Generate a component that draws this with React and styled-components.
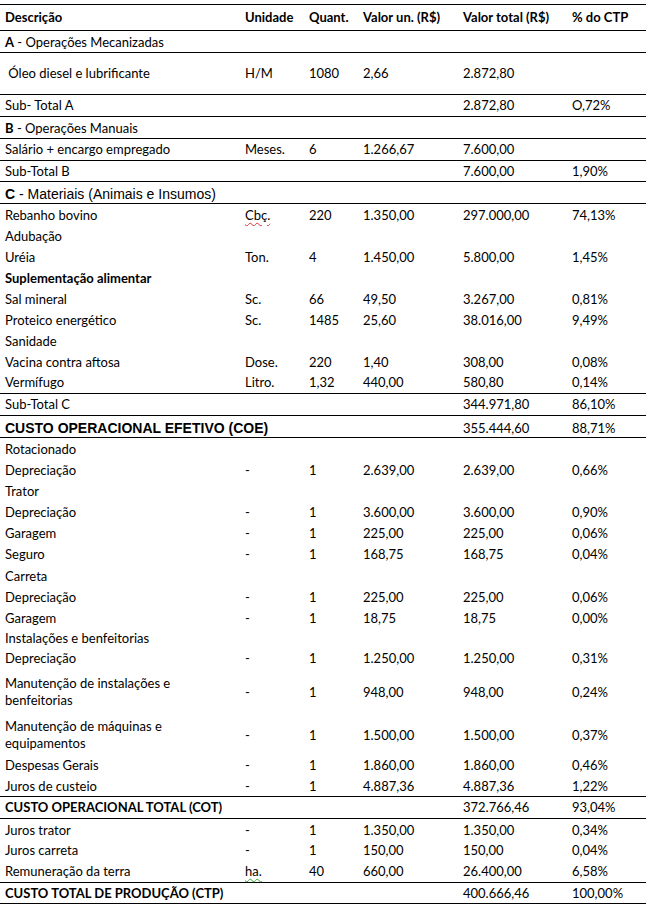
import React from 'react';
import styled, { createGlobalStyle } from 'styled-components';

const GlobalStyle = createGlobalStyle`
    html, body {
        margin: 0;
        padding: 0;
        background: #fff;
    }
    body {
        font-family: Lato, 'Liberation Sans', sans-serif;
        color: #000;
    }
`;

const B = ({ children }) => <strong>{children}</strong>;

// h = height of the row including its bottom rule
const rows = [
    { h: 26, line: true, head: true, cells: ['Descrição', 'Unidade', 'Quant.', 'Valor un. (R$)', 'Valor total (R$)', '% do CTP'] },
    { h: 22, line: true, span: true, low: 1, cells: [<><B>A</B> - Operações Mecanizadas</>] },
    { h: 42, line: true, cells: ['\u00a0Óleo diesel e lubrificante', 'H/M', '1080', '2,66', '2.872,80', ''] },
    { h: 22, line: true, cells: ['Sub- Total A', '', '', '', '2.872,80', 'O,72%'] },
    { h: 22, line: true, span: true, low: 1, cells: [<><B>B</B> - Operações Manuais</>] },
    { h: 22, line: true, cells: ['Salário + encargo empregado', 'Meses.', '6', '1.266,67', '7.600,00', ''] },
    { h: 21, line: true, cells: ['Sub-Total B', '', '', '', '7.600,00', '1,90%'] },
    { h: 22, line: true, span: true, arial: true, low: 2, cells: [<><B>C</B> - Materiais (Animais e Insumos)</>] },
    { h: 21, low: 1, cells: ['Rebanho bovino', 'Cbç.', '220', '1.350,00', '297.000,00', '74,13%'], typo: 'red' },
    { h: 21, low: 1, cells: ['Adubação'] },
    { h: 21, low: 1, cells: ['Uréia', 'Ton.', '4', '1.450,00', '5.800,00', '1,45%'] },
    { h: 21, low: 1, bold: true, cells: ['Suplementação alimentar'] },
    { h: 21, low: 1, cells: ['Sal mineral', 'Sc.', '66', '49,50', '3.267,00', '0,81%'] },
    { h: 21, low: 1, cells: ['Proteico energético', 'Sc.', '1485', '25,60', '38.016,00', '9,49%'] },
    { h: 21, low: 1, cells: ['Sanidade'] },
    { h: 21, low: 1, cells: ['Vacina contra aftosa', 'Dose.', '220', '1,40', '308,00', '0,08%'] },
    { h: 22, line: true, cells: ['Vermífugo', 'Litro.', '1,32', '440,00', '580,80', '0,14%'] },
    { h: 22, line: true, cells: ['Sub-Total C', '', '', '', '344.971,80', '86,10%'] },
    { h: 22, line: true, arial: true, bold: true, low: 2, cells: ['CUSTO OPERACIONAL EFETIVO (COE)', '', '', '', '355.444,60', '88,71%'] },
    { h: 22, low: 1, cells: ['Rotacionado'] },
    { h: 21, cells: ['Depreciação', '-', '1', '2.639,00', '2.639,00', '0,66%'] },
    { h: 21, cells: ['Trator'] },
    { h: 21, cells: ['Depreciação', '-', '1', '3.600,00', '3.600,00', '0,90%'] },
    { h: 21, cells: ['Garagem', '-', '1', '225,00', '225,00', '0,06%'] },
    { h: 22, cells: ['Seguro', '-', '1', '168,75', '168,75', '0,04%'] },
    { h: 21, cells: ['Carreta'] },
    { h: 21, cells: ['Depreciação', '-', '1', '225,00', '225,00', '0,06%'] },
    { h: 21, cells: ['Garagem', '-', '1', '18,75', '18,75', '0,00%'] },
    { h: 19, cells: ['Instalações e benfeitorias'] },
    { h: 22, cells: ['Depreciação', '-', '1', '1.250,00', '1.250,00', '0,31%'] },
    { h: 45, cells: [<>Manutenção de instalações e<br />benfeitorias</>, '-', '1', '948,00', '948,00', '0,24%'] },
    { h: 41, cells: [<>Manutenção de máquinas e<br />equipamentos</>, '-', '1', '1.500,00', '1.500,00', '0,37%'] },
    { h: 20, cells: ['Despesas Gerais', '-', '1', '1.860,00', '1.860,00', '0,46%'] },
    { h: 21, line: true, cells: ['Juros de custeio', '-', '1', '4.887,36', '4.887,36', '1,22%'] },
    { h: 22, line: true, bold: true, cells: ['CUSTO OPERACIONAL TOTAL (COT)', '', '', '', '372.766,46', '93,04%'] },
    { h: 21, low: 1, cells: ['Juros trator', '-', '1', '1.350,00', '1.350,00', '0,34%'] },
    { h: 21, cells: ['Juros carreta', '-', '1', '150,00', '150,00', '0,04%'] },
    { h: 22, line: true, cells: ['Remuneração da terra', 'ha.', '40', '660,00', '26.400,00', '6,58%'], typo: 'green' },
    { h: 21, line: true, bold: true, cells: ['CUSTO TOTAL DE PRODUÇÃO (CTP)', '', '', '', '400.666,46', '100,00%'] },
];

export default function App() {
    return (
        <>
            <GlobalStyle />
            <Page>
                <Table>
                    {rows.map((row, i) => {
                        const [desc, ...rest] = row.cells;
                        return (
                            <Row key={i} $h={row.h} $line={row.line} $low={row.low || 0}>
                                <Desc
                                    $span={row.span}
                                    $bold={row.bold || row.head}
                                    $arial={row.arial}
                                >
                                    {desc}
                                </Desc>
                                {!row.span &&
                                    [0, 1, 2, 3, 4].map((c) => (
                                        <Cell key={c} $bold={row.head}>
                                            {c === 0 && row.typo ? (
                                                <Typo $tone={row.typo}>{rest[c]}</Typo>
                                            ) : (
                                                rest[c] || ''
                                            )}
                                        </Cell>
                                    ))}
                            </Row>
                        );
                    })}
                </Table>
            </Page>
        </>
    );
}

const Page = styled.div`
    width: 646px;
    padding-top: 4px;
`;

const Table = styled.div`
    display: flex;
    flex-direction: column;
    border-top: 1px solid #000;
`;

const Row = styled.div`
    display: grid;
    grid-template-columns: 240px 64px 54px 100px 109px 1fr;
    align-items: center;
    box-sizing: border-box;
    height: ${(p) => p.$h}px;
    padding-top: ${(p) => p.$low * 2}px;
    border-bottom: 1px solid ${(p) => (p.$line ? '#000' : 'transparent')};
    font-size: 13px;
    line-height: 17px;
`;

const Desc = styled.div`
    grid-column: ${(p) => (p.$span ? '1 / -1' : 'auto')};
    padding-left: 5px;
    white-space: nowrap;
    font-family: ${(p) => (p.$arial ? "'Liberation Sans', Arial, sans-serif" : "Lato, 'Liberation Sans', sans-serif")};
    font-size: ${(p) => (p.$arial ? '14px' : '13px')};
    font-weight: ${(p) => (p.$bold ? 700 : 400)};

    strong {
        font-weight: 700;
    }
`;

const Cell = styled.div`
    padding-left: 5px;
    white-space: nowrap;
    font-weight: ${(p) => (p.$bold ? 700 : 400)};
`;

const Typo = styled.span`
    text-decoration: underline wavy ${(p) => (p.$tone === 'red' ? '#d33' : '#3a3')};
    text-decoration-thickness: 1px;
    text-underline-offset: 2px;
`;
